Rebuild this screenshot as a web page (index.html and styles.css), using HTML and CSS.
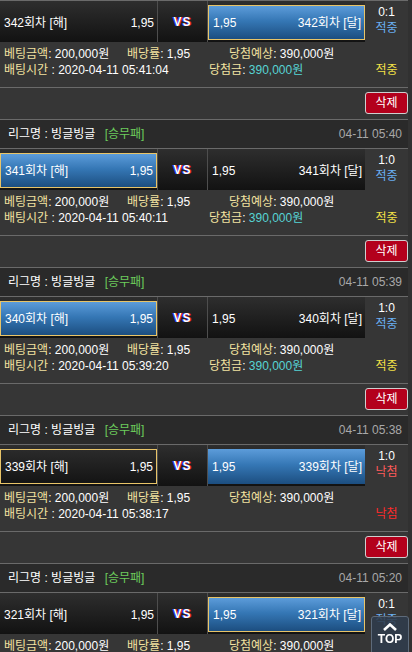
FILE: index.html
```html
<!DOCTYPE html>
<html lang="ko">
<head>
<meta charset="utf-8">
<title>배팅내역</title>
<link rel="stylesheet" href="styles.css">
</head>
<body>
<div class="list">

  <!-- block 1 -->
  <div class="bet">
    <div class="match">
      <div class="teams">
        <div class="team"><span>342회차 [해]</span><span>1,95</span></div>
        <div class="vs">VS</div>
        <div class="team win pick"><span>1,95</span><span>342회차 [달]</span></div>
      </div>
      <div class="score"><span>0:1</span><span class="hit">적중</span></div>
    </div>
    <div class="info">
      <div class="c1"><span class="lbl">베팅금액</span>: 200,000원</div>
      <div class="c2"><span class="lbl">배당률</span>: 1,95</div>
      <div class="c3 expect"><span class="lbl">당첨예상</span>: 390,000원</div>
      <div class="c4"></div>
      <div class="c12"><span class="lbl">배팅시간</span> : 2020-04-11 05:41:04</div>
      <div class="c3 won"><span class="lbl">당첨금</span>: <span class="amt">390,000원</span></div>
      <div class="c4 res-hit">적중</div>
    </div>
    <div class="actions"><button class="del" type="button">삭제</button></div>
  </div>

  <!-- block 2 -->
  <div class="bet">
    <div class="league"><span>리그명 : 빙글빙글 <span class="type">[승무패]</span></span><span class="date">04-11 05:40</span></div>
    <div class="match">
      <div class="teams">
        <div class="team win pick"><span>341회차 [해]</span><span>1,95</span></div>
        <div class="vs">VS</div>
        <div class="team"><span>1,95</span><span>341회차 [달]</span></div>
      </div>
      <div class="score"><span>1:0</span><span class="hit">적중</span></div>
    </div>
    <div class="info">
      <div class="c1"><span class="lbl">베팅금액</span>: 200,000원</div>
      <div class="c2"><span class="lbl">배당률</span>: 1,95</div>
      <div class="c3 expect"><span class="lbl">당첨예상</span>: 390,000원</div>
      <div class="c4"></div>
      <div class="c12"><span class="lbl">배팅시간</span> : 2020-04-11 05:40:11</div>
      <div class="c3 won"><span class="lbl">당첨금</span>: <span class="amt">390,000원</span></div>
      <div class="c4 res-hit">적중</div>
    </div>
    <div class="actions"><button class="del" type="button">삭제</button></div>
  </div>

  <!-- block 3 -->
  <div class="bet">
    <div class="league"><span>리그명 : 빙글빙글 <span class="type">[승무패]</span></span><span class="date">04-11 05:39</span></div>
    <div class="match">
      <div class="teams">
        <div class="team win pick"><span>340회차 [해]</span><span>1,95</span></div>
        <div class="vs">VS</div>
        <div class="team"><span>1,95</span><span>340회차 [달]</span></div>
      </div>
      <div class="score"><span>1:0</span><span class="hit">적중</span></div>
    </div>
    <div class="info">
      <div class="c1"><span class="lbl">베팅금액</span>: 200,000원</div>
      <div class="c2"><span class="lbl">배당률</span>: 1,95</div>
      <div class="c3 expect"><span class="lbl">당첨예상</span>: 390,000원</div>
      <div class="c4"></div>
      <div class="c12"><span class="lbl">배팅시간</span> : 2020-04-11 05:39:20</div>
      <div class="c3 won"><span class="lbl">당첨금</span>: <span class="amt">390,000원</span></div>
      <div class="c4 res-hit">적중</div>
    </div>
    <div class="actions"><button class="del" type="button">삭제</button></div>
  </div>

  <!-- block 4 -->
  <div class="bet">
    <div class="league"><span>리그명 : 빙글빙글 <span class="type">[승무패]</span></span><span class="date">04-11 05:38</span></div>
    <div class="match">
      <div class="teams">
        <div class="team pick"><span>339회차 [해]</span><span>1,95</span></div>
        <div class="vs">VS</div>
        <div class="team win"><span>1,95</span><span>339회차 [달]</span></div>
      </div>
      <div class="score"><span>1:0</span><span class="miss">낙첨</span></div>
    </div>
    <div class="info">
      <div class="c1"><span class="lbl">베팅금액</span>: 200,000원</div>
      <div class="c2"><span class="lbl">배당률</span>: 1,95</div>
      <div class="c3 expect"><span class="lbl">당첨예상</span>: 390,000원</div>
      <div class="c4"></div>
      <div class="c12"><span class="lbl">배팅시간</span> : 2020-04-11 05:38:17</div>
      <div class="c3 won"></div>
      <div class="c4 res-miss">낙첨</div>
    </div>
    <div class="actions"><button class="del" type="button">삭제</button></div>
  </div>

  <!-- block 5 -->
  <div class="bet">
    <div class="league"><span>리그명 : 빙글빙글 <span class="type">[승무패]</span></span><span class="date">04-11 05:20</span></div>
    <div class="match">
      <div class="teams">
        <div class="team"><span>321회차 [해]</span><span>1,95</span></div>
        <div class="vs">VS</div>
        <div class="team win pick"><span>1,95</span><span>321회차 [달]</span></div>
      </div>
      <div class="score"><span>0:1</span><span class="hit">적중</span></div>
    </div>
    <div class="info">
      <div class="c1"><span class="lbl">베팅금액</span>: 200,000원</div>
      <div class="c2"><span class="lbl">배당률</span>: 1,95</div>
      <div class="c3 expect"><span class="lbl">당첨예상</span>: 390,000원</div>
      <div class="c4"></div>
      <div class="c12"><span class="lbl">배팅시간</span> : 2020-04-11 05:20:03</div>
      <div class="c3 won"><span class="lbl">당첨금</span>: <span class="amt">390,000원</span></div>
      <div class="c4 res-hit">적중</div>
    </div>
  </div>

</div>

<a class="top-btn" href="#">
  <svg width="16" height="8" viewBox="0 0 16 8"><polyline points="2,7 8,1.5 14,7" fill="none" stroke="#fff" stroke-width="2.6"/></svg>
  <span>TOP</span>
</a>
</body>
</html>
```

FILE: styles.css
```css
* {
  box-sizing: border-box;
  margin: 0;
  padding: 0;
}

html,
body {
  background: #313131;
}

body {
  margin: 0;
  font-family: "Liberation Sans", "Noto Sans CJK KR", sans-serif;
  font-size: 12px;
  line-height: 16px;
  color: #fff;
  overflow: hidden;
}

.list {
  width: 408px;
  background: #363636;
  border-top: 1px solid #6a6a6a;
}

.league {
  display: flex;
  justify-content: space-between;
  align-items: center;
  height: 30px;
  padding: 0 6px 0 8px;
  background: #2a2a2a;
  border-top: 1px solid #6a6a6a;
  border-bottom: 1px solid #6a6a6a;
}

.type {
  color: #6ccc5c;
  margin-left: 6px;
}

.date {
  color: #a8a8a8;
}

.match {
  display: flex;
  height: 41px;
}

.teams {
  display: flex;
  width: 365px;
  padding-top: 4px;
  background: linear-gradient(#2e2e2e, #121212);
}

.team {
  display: flex;
  justify-content: space-between;
  align-items: center;
  width: 157px;
  height: 35px;
  padding: 0 3px 0 4px;
}

.team.win {
  background: linear-gradient(#5c9cda, #3577b5 45%, #1c4e80);
}

.team.pick {
  border: 1px solid #e8c468;
}

.vs {
  width: 51px;
  height: 41px;
  margin-top: -4px;
  display: flex;
  align-items: center;
  justify-content: center;
  border-left: 1px solid #4e4e4e;
  border-right: 1px solid #4e4e4e;
  font-family: "Liberation Sans", sans-serif;
  font-weight: bold;
  font-size: 12px;
  letter-spacing: 1px;
  color: #fff;
  text-shadow: -1px 0 #2a3cff, 1px 0 #e82020;
}

.score {
  width: 43px;
  padding-top: 3px;
  display: flex;
  flex-direction: column;
  align-items: center;
}

.hit {
  color: #69aef2;
}

.miss {
  color: #ff5a5a;
}

.info {
  display: grid;
  grid-template-columns: 123px 85px 157px 43px;
  grid-auto-rows: 16px;
  height: 45px;
  padding-top: 4px;
  white-space: nowrap;
}

.c1 {
  padding-left: 4px;
}

.c2 {
  padding-left: 4px;
}

.c12 {
  grid-column: 1 / 3;
  padding-left: 4px;
}

.expect {
  padding-left: 21px;
}

.won {
  padding-left: 1px;
}

.c4 {
  text-align: center;
}

.lbl {
  color: #f2e2a0;
}

.amt {
  color: #56d4d4;
}

.res-hit {
  color: #f2e046;
}

.res-miss {
  color: #ff2a2a;
}

.actions {
  display: flex;
  justify-content: flex-end;
  height: 32px;
  padding-top: 4px;
  border-top: 1px solid #6a6a6a;
}

.del {
  width: 43px;
  height: 22px;
  border: 1px solid #cfcfcf;
  border-radius: 3px;
  background: #b3001c;
  color: #fff;
  font-family: "Liberation Sans", "Noto Sans CJK KR", sans-serif;
  font-size: 12px;
  line-height: 18px;
}

.top-btn {
  position: fixed;
  right: 3px;
  bottom: -4px;
  width: 38px;
  height: 40px;
  display: flex;
  flex-direction: column;
  align-items: center;
  padding-top: 6px;
  background: rgba(48, 60, 76, 0.88);
  border: 1px solid #5d6a7a;
  border-radius: 3px;
  color: #fff;
  text-decoration: none;
  font-family: "Liberation Sans", sans-serif;
  font-weight: bold;
  font-size: 12px;
  line-height: 14px;
}

.top-btn svg {
  display: block;
  margin-bottom: 1px;
}
```
